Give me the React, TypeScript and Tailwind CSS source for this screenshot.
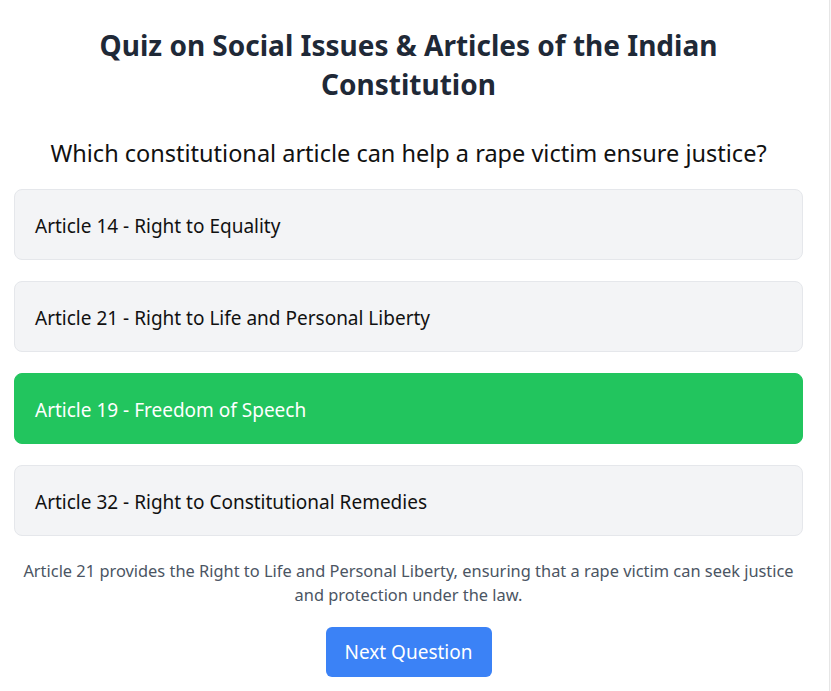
const options = [
  { id: 1, label: "Article 14 - Right to Equality" },
  { id: 2, label: "Article 21 - Right to Life and Personal Liberty" },
  { id: 3, label: "Article 19 - Freedom of Speech" },
  { id: 4, label: "Article 32 - Right to Constitutional Remedies" },
];

const selectedId = 3;

export default function App() {
  return (
    <div className="min-h-screen bg-[#f7f7f7] font-['Noto_Sans',sans-serif]">
      <div className="min-h-screen w-[830px] border-r border-[#e6e6e6] bg-white pl-[14px] pr-[26px] pt-[26px] pb-[20px]">
        <h1 className="mx-auto max-w-[680px] text-center text-[28px] font-bold leading-[39px] text-[#1f2937]">
          Quiz on Social Issues &amp; Articles of the Indian Constitution
        </h1>
        <h2 className="mt-[33px] text-center text-[23.5px] leading-[32px] text-[#111]">
          Which constitutional article can help a rape victim ensure justice?
        </h2>
        <div className="mt-[20px] flex flex-col gap-[21px]">
          {options.map((option) => {
            const isSelected = option.id === selectedId;
            return (
              <button
                key={option.id}
                type="button"
                className={
                  isSelected
                    ? "flex h-[71px] w-full items-center rounded-lg border border-[#22c55e] bg-[#22c55e] px-[20px] pt-[3px] text-left text-[19px] text-white"
                    : "flex h-[71px] w-full items-center rounded-lg border border-[#e5e7eb] bg-[#f3f4f6] px-[20px] pt-[3px] text-left text-[19px] text-[#111]"
                }
              >
                {option.label}
              </button>
            );
          })}
        </div>
        <p className="mt-[23px] px-[8px] text-center text-[16.4px] leading-[24px] text-[#4b5563]">
          Article 21 provides the Right to Life and Personal Liberty, ensuring that a rape victim can seek justice and
          protection under the law.
        </p>
        <div className="mt-[20px] flex justify-center">
          <button
            type="button"
            className="h-[50px] w-[166px] rounded-md bg-[#3b82f6] text-[19px] text-white"
          >
            Next Question
          </button>
        </div>
      </div>
    </div>
  );
}
